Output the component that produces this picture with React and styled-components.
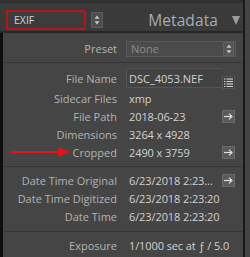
import React from "react";
import styled, { createGlobalStyle } from "styled-components";

const Global = createGlobalStyle`
  html, body { margin: 0; padding: 0; background: #454545; overflow: hidden; }
  #root { width: 250px; height: 257px; }
`;

const Frame = styled.div`
  display: flex;
  width: 250px;
  height: 257px;
  font-family: "Open Sans", "Noto Sans", sans-serif;
  font-size: 11px;
`;

const Panel = styled.div`
  width: 243px;
  display: flex;
  flex-direction: column;
  background: #454545;
`;

const Edge = styled.div`
  width: 2px;
  background: #1a1a1a;
`;

const Gutter = styled.div`
  flex: 1;
  background: #444444;
`;

const Header = styled.div`
  box-sizing: border-box;
  padding: 6px 3px 0 6px;
  display: flex;
  align-items: center;
  background: #3a3a3a;
  border-top: 3px solid #2f2f2f;
  border-bottom: 2px solid #272727;
  height: 33px;
`;

const ModeBox = styled.div`
  width: 80px;
  height: 20px;
  box-sizing: border-box;
  border: 2px solid #b3161a;
  background: #3c3c3c;
  color: #d4d4d4;
  padding-left: 6px;
  display: flex;
  align-items: center;
  font-size: 10.5px;
`;

const Stepper = styled.div`
  width: ${(p) => p.$w || 12}px;
  height: ${(p) => p.$h || 16}px;
  box-sizing: border-box;
  margin-left: ${(p) => p.$ml || 0}px;
  background: ${(p) => p.$bg || "#4d4d4d"};
  border: 1px solid ${(p) => p.$bd || "#5c5c5c"};
  display: flex;
  align-items: center;
  justify-content: center;
`;

const Title = styled.div`
  margin-left: auto;
  color: #a5acb3;
  font-size: 15.5px;
  letter-spacing: 0.1px;
`;

const Caret = styled.div`
  width: 0;
  height: 0;
  margin-left: 14px;
  border-left: 4.5px solid transparent;
  border-right: 4.5px solid transparent;
  border-top: 9px solid #9c9c9c;
`;

const Body = styled.div`
  flex: 1;
  border-left: 3px solid #0f0f0f;
  display: flex;
  flex-direction: column;
`;

const Section = styled.div`
  padding: ${(p) => p.$pad};
  border-bottom: ${(p) => (p.$last ? "none" : "1px solid #363636")};
  display: flex;
  flex-direction: column;
`;

const Row = styled.div`
  display: grid;
  grid-template-columns: 123px 1fr 14px;
  padding-right: 7px;
  height: ${(p) => p.$h || 18}px;
  align-items: center;
`;

const Label = styled.div`
  position: relative;
  text-align: right;
  padding-right: 9px;
  color: #b3b3b3;
  white-space: nowrap;
`;

const Value = styled.div`
  grid-column: ${(p) => (p.$span ? "2 / 4" : "auto")};
  color: #d2d2d2;
  padding-left: 3px;
  white-space: nowrap;
  letter-spacing: -0.1px;
`;

const ValueBox = styled.div`
  height: 20px;
  box-sizing: border-box;
  padding-left: 2px;
  display: flex;
  align-items: center;
  color: #d2d2d2;
  background: #424242;
  border: 1px solid #555;
  border-right: none;
`;

const Select = styled.div`
  grid-column: 2 / 4;
  height: 16px;
  box-sizing: border-box;
  display: flex;
  align-items: center;
  justify-content: space-between;
  padding: 0 1px 0 4px;
  background: #4b4b4b;
  border: 1px solid #5a5a5a;
  color: #8c8c8c;
`;

const ActionButton = styled.div`
  width: 13px;
  height: 13px;
  box-sizing: border-box;
  align-self: ${(p) => p.$align || "center"};
  background: ${(p) => (p.$dark ? "#3d3d3d" : "#5a5a5a")};
  border: 1px solid ${(p) => (p.$dark ? "#555" : "#6b6b6b")};
  display: flex;
  align-items: center;
  justify-content: center;
`;

const Pointer = styled.svg`
  position: absolute;
  left: 7px;
  top: 50%;
  margin-top: -5px;
`;

const UpDown = () => (
  <svg width="6" height="10" viewBox="0 0 6 10">
    <path d="M3 0.5 L5.5 3.8 L0.5 3.8 Z" fill="#c8c8c8" />
    <path d="M3 9.5 L5.5 6.2 L0.5 6.2 Z" fill="#c8c8c8" />
  </svg>
);

const Arrow = () => (
  <svg width="9" height="7" viewBox="0 0 9 7">
    <path d="M0 3.5 H7.5" stroke="#dedede" strokeWidth="1.2" />
    <path d="M5 0.8 L8 3.5 L5 6.2" stroke="#dedede" strokeWidth="1.2" fill="none" />
  </svg>
);

const ListIcon = () => (
  <svg width="9" height="9" viewBox="0 0 9 9">
    {[1, 3.5, 6, 8.5].map((y) => (
      <g key={y}>
        <rect x="0" y={y - 0.6} width="1.4" height="1.2" fill="#cfcfcf" />
        <rect x="2.4" y={y - 0.6} width="6.6" height="1.2" fill="#cfcfcf" />
      </g>
    ))}
  </svg>
);

const Item = ({ label, value, action, h, children }) => (
  <Row $h={h}>
    <Label>
      {children}
      {label}
    </Label>
    <Value $span={!action}>{value}</Value>
    {action && (
      <ActionButton>
        <Arrow />
      </ActionButton>
    )}
  </Row>
);

export default function App() {
  return (
    <Frame>
      <Global />
      <Panel>
        <Header>
          <ModeBox>EXIF</ModeBox>
          <Stepper $ml={5}>
            <UpDown />
          </Stepper>
          <Title>Metadata</Title>
          <Caret />
        </Header>
        <Body>
          <Section $pad="6px 0 4px 0">
            <Row $h={19}>
              <Label>Preset</Label>
              <Select>
                None
                <Stepper $w={11} $h={14} $bg="#555" $bd="#5f5f5f">
                  <UpDown />
                </Stepper>
              </Select>
            </Row>
          </Section>
          <Section $pad="4px 0 5px 0">
            <Row $h={22}>
              <Label>File Name</Label>
              <ValueBox>DSC_4053.NEF</ValueBox>
              <ActionButton $dark $align="end">
                <ListIcon />
              </ActionButton>
            </Row>
            <Item label="Sidecar Files" value="xmp" />
            <Item label="File Path" value="2018-06-23" action />
            <Item label="Dimensions" value="3264 x 4928" />
            <Item label="Cropped" value="2490 x 3759" action>
              <Pointer width="62" height="10" viewBox="0 0 62 10">
                <path d="M0 5 H50" stroke="#e3141a" strokeWidth="2.2" />
                <path d="M48 0.5 L61 5 L48 9.5 Z" fill="#e3141a" />
              </Pointer>
            </Item>
          </Section>
          <Section $pad="4px 0 6px 0">
            <Item label="Date Time Original" value="6/23/2018 2:23..." action />
            <Item label="Date Time Digitized" value="6/23/2018 2:23:20" />
            <Item label="Date Time" value="6/23/2018 2:23:20" />
          </Section>
          <Section $pad="4px 0 0 0" $last>
            <Item label="Exposure" value="1/1000 sec at ƒ / 5.0" />
          </Section>
        </Body>
      </Panel>
      <Edge />
      <Gutter />
    </Frame>
  );
}
